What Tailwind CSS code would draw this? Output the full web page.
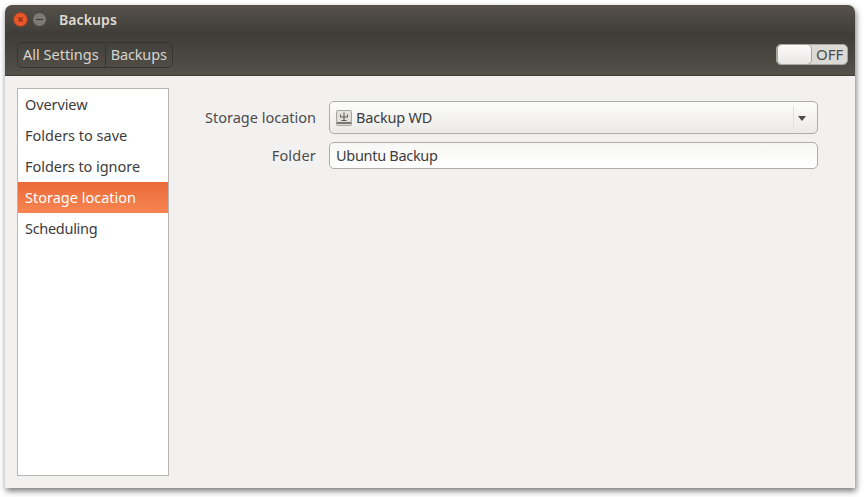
<!doctype html>
<html><head><meta charset="utf-8">
<script src="https://cdn.jsdelivr.net/npm/@tailwindcss/browser@4"></script>
</head>
<body class="bg-white">
<div class="w-[864px] h-[497px] pt-[5px] pl-[5px] overflow-hidden font-['Noto_Sans',sans-serif]">
  <div class="w-[850px] h-[483px] flex flex-col rounded-t-[7px] bg-[#f2f1f0] shadow-[1px_3px_6px_rgba(0,0,0,0.55)]">
    <div class="h-[31px] shrink-0 rounded-t-[7px] bg-gradient-to-b from-[#55514a] to-[#3e3c37] flex items-center pl-[8px] pb-[2px]">
      <div class="w-[15px] h-[15px] rounded-full bg-[#e9562a] border border-[#8f3d20] flex items-center justify-center">
        <svg width="7" height="7" viewBox="0 0 7 7"><path d="M1.5 1.5 L5.5 5.5 M5.5 1.5 L1.5 5.5" stroke="#7a3115" stroke-width="1.1"/></svg>
      </div>
      <div class="w-[15px] h-[15px] ml-[4px] rounded-full bg-[#7b7972] border border-[#45433e] flex items-center justify-center">
        <div class="w-[7px] h-[1px] bg-[#3d3b37]"></div>
      </div>
      <span class="ml-[12px] text-[14px] font-semibold text-[#dfdbd2] tracking-[0.1px]">Backups</span>
    </div>
    <div class="h-[40px] shrink-0 bg-gradient-to-b from-[#3f3d38] to-[#54514a] flex items-center justify-between pl-[12px] pr-[7px] border-b border-[#3c3b37]">
      <div class="flex h-[26px] mt-[-2px] rounded-[5px] border border-[#37352f] text-[14.5px] text-[#d8d5cd] items-center">
        <span class="pl-[5px] pr-[6px] h-full flex items-center border-r border-[#37352f]">All Settings</span>
        <span class="pl-[5px] pr-[5px] h-full flex items-center tracking-[-0.15px]">Backups</span>
      </div>
      <div class="w-[72px] h-[21px] rounded-[5px] bg-[#dcdad5] flex items-center border border-[#a8a69f] mt-[-2px]">
        <div class="w-[35px] h-[21px] shrink-0 rounded-[5px] border border-[#a8a69f] bg-gradient-to-b from-[#fbfbfa] to-[#e8e7e4]"></div>
        <span class="ml-[4px] text-[15px] text-[#4c4c4c]">OFF</span>
      </div>
    </div>
    <div class="flex-1 flex pl-[12px] pt-[12px] pb-[12px] min-h-0">
      <div class="w-[152px] shrink-0 bg-white border border-[#b8b6b0] text-[14.5px] text-[#3c3c3c]">
        <div class="h-[31px] pl-[7px] flex items-center tracking-[-0.1px]">Overview</div>
        <div class="h-[31px] pl-[7px] flex items-center">Folders to save</div>
        <div class="h-[31px] pl-[7px] flex items-center tracking-[-0.05px]">Folders to ignore</div>
        <div class="h-[31px] pl-[7px] flex items-center text-white bg-gradient-to-b from-[#ea6a37] to-[#f68552]">Storage location</div>
        <div class="h-[31px] pl-[7px] flex items-center tracking-[-0.3px]">Scheduling</div>
      </div>
      <div class="pl-[36px] pt-[13px] text-[14.5px] text-[#3c3c3c]">
        <div class="flex items-center gap-[13px]">
          <div class="w-[111px] text-right text-[#4c4c4c] whitespace-nowrap">Storage location</div>
          <div class="w-[489px] h-[33px] rounded-[5px] border border-[#aeaca6] bg-gradient-to-b from-[#fdfdfc] to-[#ebeae7] flex items-center pl-[6px]">
            <svg width="16" height="16" viewBox="0 0 16 16"><rect x="0.5" y="0.5" width="15" height="15" rx="1" fill="#e2e0da" stroke="#a5a39d"/><path d="M8 2.5 V10.5 M4.5 4.5 V7 H11.5 V4.5 M5.5 10.5 H10.5" stroke="#5d5b55" fill="none"/><path d="M1 13 H15" stroke="#55534e" stroke-width="1.5"/></svg>
            <span class="ml-[4px] flex-1 tracking-[-0.2px]">Backup WD</span>
            <div class="w-[1px] h-[24px] bg-[#e2e0dc]"></div>
            <svg class="ml-[4px] mr-[11px] mt-[2px]" width="8" height="5" viewBox="0 0 8 5"><path d="M0 0 H8 L4 5 Z" fill="#4a4a4a"/></svg>
          </div>
        </div>
        <div class="flex items-center gap-[13px] mt-[8px]">
          <div class="w-[111px] text-right text-[#4c4c4c] tracking-[0.2px]">Folder</div>
          <div class="w-[489px] h-[27px] rounded-[5px] border border-[#aeaca6] bg-gradient-to-b from-[#f7f7f6] to-white flex items-center pl-[6px] tracking-[-0.3px]">Ubuntu Backup</div>
        </div>
      </div>
    </div>
  </div>
</div>
</body></html>
